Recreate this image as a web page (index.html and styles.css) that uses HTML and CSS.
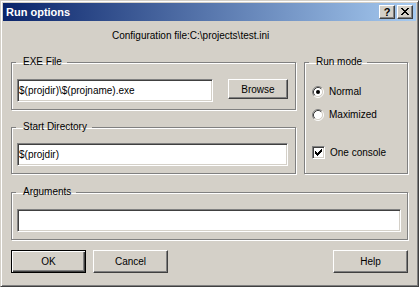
FILE: index.html
```html
<!DOCTYPE html>
<html lang="en">
<head>
    <meta charset="UTF-8">
    <title>Run options</title>
    <link rel="stylesheet" href="styles.css">
</head>
<body>
    <div class="window">
        <div class="titlebar">
            <span class="title">Run options</span>
            <div class="caption-buttons">
                <button class="caption-btn help-btn">?</button>
                <button class="caption-btn close-btn">
                    <svg width="8" height="7" viewBox="0 0 8 7">
                        <path d="M0 0h2v1h-2z M6 0h2v1h-2z M1 1h2v1h-2z M5 1h2v1h-2z M2 2h4v1h-4z M3 3h2v1h-2z M2 4h4v1h-4z M1 5h2v1h-2z M5 5h2v1h-2z M0 6h2v1h-2z M6 6h2v1h-2z" fill="#000"/>
                    </svg>
                </button>
            </div>
        </div>
        <div class="content">
            <div class="config">Configuration file:C:\projects\test.ini</div>

            <div class="groups">
                <fieldset class="group exe-group">
                    <legend>EXE File</legend>
                    <div class="group-body exe-body">
                        <input class="field exe-field" type="text" value="$(projdir)\$(projname).exe">
                        <button class="btn browse-btn">Browse</button>
                    </div>
                </fieldset>

                <fieldset class="group mode-group">
                    <legend>Run mode</legend>
                    <div class="group-body mode-body">
                        <div class="option">
                            <svg class="radio" width="12" height="12" viewBox="0 0 12 12">
                                <circle cx="6" cy="6" r="4.5" fill="#fff"/>
                                <path d="M2.11 9.89 A5.5 5.5 0 0 1 9.89 2.11" fill="none" stroke="#808080"/>
                                <path d="M9.89 2.11 A5.5 5.5 0 0 1 2.11 9.89" fill="none" stroke="#fff"/>
                                <path d="M2.82 9.18 A4.5 4.5 0 0 1 9.18 2.82" fill="none" stroke="#404040"/>
                                <path d="M9.18 2.82 A4.5 4.5 0 0 1 2.82 9.18" fill="none" stroke="#d4d0c8"/>
                                <circle cx="6" cy="6" r="2" fill="#000"/>
                            </svg>
                            <span>Normal</span>
                        </div>
                        <div class="option">
                            <svg class="radio" width="12" height="12" viewBox="0 0 12 12">
                                <circle cx="6" cy="6" r="4.5" fill="#fff"/>
                                <path d="M2.11 9.89 A5.5 5.5 0 0 1 9.89 2.11" fill="none" stroke="#808080"/>
                                <path d="M9.89 2.11 A5.5 5.5 0 0 1 2.11 9.89" fill="none" stroke="#fff"/>
                                <path d="M2.82 9.18 A4.5 4.5 0 0 1 9.18 2.82" fill="none" stroke="#404040"/>
                                <path d="M9.18 2.82 A4.5 4.5 0 0 1 2.82 9.18" fill="none" stroke="#d4d0c8"/>
                            </svg>
                            <span>Maximized</span>
                        </div>
                        <div class="option check-option">
                            <span class="checkbox">
                                <svg width="11" height="11" viewBox="0 0 11 11">
                                    <path d="M2 4h1v3h-1z M3 5h1v3h-1z M4 6h1v3h-1z M5 5h1v3h-1z M6 4h1v3h-1z M7 3h1v3h-1z M8 2h1v3h-1z" fill="#000"/>
                                </svg>
                            </span>
                            <span>One console</span>
                        </div>
                    </div>
                </fieldset>

                <fieldset class="group dir-group">
                    <legend>Start Directory</legend>
                    <div class="group-body dir-body">
                        <input class="field dir-field" type="text" value="$(projdir)">
                    </div>
                </fieldset>
            </div>

            <fieldset class="group args-group">
                <legend>Arguments</legend>
                <div class="group-body args-body">
                    <input class="field args-field" type="text" value="">
                </div>
            </fieldset>

            <div class="buttons">
                <button class="btn default-btn">OK</button>
                <button class="btn">Cancel</button>
                <button class="btn help-button">Help</button>
            </div>
        </div>
    </div>
</body>
</html>
```

FILE: styles.css
```css
body {
    margin: 0;
    padding: 0;
    background: #d4d0c8;
    font-family: "Liberation Sans", Arial, sans-serif;
    font-size: 10px;
    color: #000;
}
.window {
    width: 419px;
    height: 287px;
    box-sizing: border-box;
    background: #d4d0c8;
    border: 1px solid;
    border-color: #d4d0c8 #404040 #404040 #d4d0c8;
    box-shadow: inset 1px 1px #fff, inset -1px -1px #808080;
    padding: 2px;
    overflow: hidden;
}
.titlebar {
    height: 18px;
    display: flex;
    align-items: center;
    justify-content: space-between;
    padding: 0 3px 0 3px;
    background: linear-gradient(to right, #0a246a, #a6caf0);
}
.title {
    color: #fff;
    font-weight: bold;
    font-size: 11px;
}
.caption-buttons {
    display: flex;
    gap: 2px;
}
.caption-btn {
    width: 16px;
    height: 14px;
    padding: 0;
    margin: 0;
    background: #d4d0c8;
    border: 1px solid;
    border-color: #fff #404040 #404040 #fff;
    box-shadow: inset -1px -1px #808080;
    display: flex;
    align-items: center;
    justify-content: center;
    font-family: "Liberation Sans", Arial, sans-serif;
    font-weight: bold;
    font-size: 11px;
    line-height: 12px;
    color: #000;
}
.close-btn svg {
    display: block;
    margin-top: -1px;
}
.content {
    padding: 9px 8px 0 8px;
}
.config {
    margin-left: 101px;
    line-height: 12px;
    height: 12px;
}
.groups {
    margin-top: 14px;
    display: grid;
    grid-template-columns: 285px 104px;
    column-gap: 8px;
    row-gap: 11px;
}
.group {
    margin: 0;
    padding: 0;
    min-width: 0;
    border: 1px solid #808080;
    box-shadow: 1px 1px 0 #fff, inset 1px 1px 0 #fff;
}
.group legend {
    margin-left: 4px;
    padding: 0 5px 0 7px;
    line-height: 12px;
    height: 12px;
}
.exe-group {
    grid-column: 1;
    grid-row: 1;
}
.dir-group {
    grid-column: 1;
    grid-row: 2;
}
.mode-group {
    grid-column: 2;
    grid-row: 1 / 3;
}
.exe-body {
    display: flex;
    align-items: flex-start;
    gap: 15px;
    padding: 11px 7px 7px 5px;
}
.dir-body {
    padding: 10px 7px 7px 5px;
}
.mode-body {
    padding: 12px 0 0 7px;
}
.args-group {
    margin-top: 12px;
}
.args-body {
    padding: 11px 6px 7px 5px;
}
.field {
    display: block;
    box-sizing: border-box;
    height: 23px;
    margin: 0;
    padding: 0 1px;
    background: #fff;
    border: 1px solid;
    border-color: #808080 #fff #fff #808080;
    box-shadow: inset 1px 1px #404040, inset -1px -1px #d4d0c8;
    font-family: "Liberation Sans", Arial, sans-serif;
    font-size: 10px;
    color: #000;
    outline: none;
}
.exe-field {
    width: 196px;
}
.dir-field {
    width: 271px;
}
.args-field {
    width: 384px;
}
.option {
    display: flex;
    align-items: center;
    gap: 5px;
    height: 23px;
}
.radio {
    display: block;
    flex: none;
}
.check-option {
    margin-top: 15px;
}
.checkbox {
    width: 13px;
    height: 13px;
    box-sizing: border-box;
    flex: none;
    background: #fff;
    border: 1px solid;
    border-color: #808080 #fff #fff #808080;
    box-shadow: inset 1px 1px #404040, inset -1px -1px #d4d0c8;
}
.checkbox svg {
    display: block;
}
.btn {
    box-sizing: border-box;
    width: 75px;
    height: 23px;
    margin: 0;
    padding: 0;
    background: #d4d0c8;
    border: 1px solid;
    border-color: #fff #404040 #404040 #fff;
    box-shadow: inset -1px -1px #808080;
    font-family: "Liberation Sans", Arial, sans-serif;
    font-size: 10px;
    color: #000;
}
.browse-btn {
    width: 60px;
    height: 20px;
}
.default-btn {
    border-color: #000;
    box-shadow: inset 1px 1px #fff, inset -1px -1px #404040, inset -2px -2px #808080;
}
.buttons {
    margin-top: 10px;
    display: flex;
    gap: 7px;
}
.help-button {
    margin-left: auto;
}
```
